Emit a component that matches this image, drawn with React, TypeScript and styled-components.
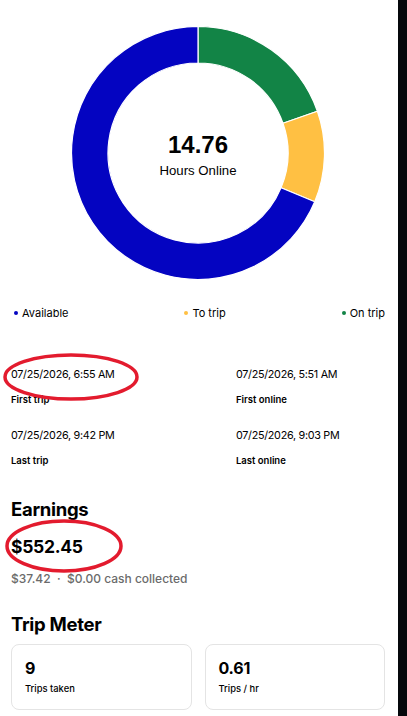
import React from "react";
import styled, { createGlobalStyle } from "styled-components";

const Global = createGlobalStyle`
  html, body { margin: 0; padding: 0; background: #ffffff; }
  body { font-family: Inter, "Noto Sans", sans-serif; color: #000; -webkit-font-smoothing: antialiased; }
`;

const Screen = styled.div`
  display: flex;
  width: 407px;
  height: 716px;
  overflow: hidden;
`;

const Main = styled.main`
  position: relative;
  flex: 1;
  padding: 0 13px 0 11px;
  background: #ffffff;
`;

const EdgeBar = styled.div`
  width: 9px;
  background: #05080c;
`;

const ChartWrap = styled.div`
  position: relative;
  display: flex;
  justify-content: center;
  padding-top: 26px;
`;

const CenterText = styled.div`
  position: absolute;
  top: 26px;
  left: 0;
  right: 0;
  height: 254px;
  display: flex;
  flex-direction: column;
  align-items: center;
  justify-content: center;
  font-family: "Liberation Sans", Arial, sans-serif;
`;

const BigHours = styled.div`
  font-size: 24px;
  font-weight: 700;
  line-height: 28px;
  margin-top: 4px;
`;

const HoursLabel = styled.div`
  font-size: 13.2px;
  line-height: 16px;
  margin-top: 4px;
`;

const Legend = styled.div`
  display: flex;
  justify-content: space-between;
  margin-top: 26px;
  padding-left: 3px;
`;

const LegendItem = styled.div`
  display: flex;
  align-items: center;
  gap: 4px;
  font-size: 11px;
  line-height: 14px;
`;

const Dot = styled.span<{ $c: string }>`
  width: 4px;
  height: 4px;
  border-radius: 50%;
  background: ${(p) => p.$c};
`;

const TimesGrid = styled.div`
  display: grid;
  grid-template-columns: 225px 1fr;
  row-gap: 23px;
  margin-top: 48px;
`;

const TimeBlock = styled.div`
  display: flex;
  flex-direction: column;
  gap: 12px;
`;

const TimeValue = styled.div`
  font-size: 10.8px;
  letter-spacing: -0.3px;
  line-height: 14px;
`;

const TimeLabel = styled.div`
  font-size: 9.5px;
  font-weight: 600;
  line-height: 12px;
`;

const SectionTitle = styled.h2<{ $top: number }>`
  margin: ${(p) => p.$top}px 0 0;
  font-size: 18.5px;
  font-weight: 700;
  line-height: 24px;
  letter-spacing: -0.3px;
`;

const Amount = styled.div`
  margin-top: 13px;
  font-size: 17.5px;
  font-weight: 700;
  line-height: 26px;
  letter-spacing: -0.3px;
`;

const SubLine = styled.div`
  margin-top: 11px;
  font-size: 12px;
  font-weight: 500;
  line-height: 16px;
  color: #6b6b6b;
`;

const Cards = styled.div`
  display: grid;
  grid-template-columns: 1fr 1fr;
  gap: 13px;
  margin-top: 8px;
`;

const Card = styled.div`
  border: 1px solid #e4e4e4;
  border-radius: 8px;
  padding: 13px;
  height: 66px;
  box-sizing: border-box;
`;

const CardValue = styled.div`
  font-size: 16px;
  font-weight: 700;
  line-height: 20px;
  letter-spacing: -0.2px;
`;

const CardLabel = styled.div`
  margin-top: 4px;
  font-size: 9.4px;
  font-weight: 500;
  line-height: 13px;
`;

const Marks = styled.svg`
  position: absolute;
  left: 0;
  top: 0;
  pointer-events: none;
`;

const segments = [
  { label: "On trip", hours: 2.9, color: "#128446" },
  { label: "To trip", hours: 1.72, color: "#ffc043" },
  { label: "Available", hours: 10.14, color: "#0404c1" },
];

const polar = (cx: number, cy: number, r: number, deg: number) => {
  const a = (deg * Math.PI) / 180;
  return [cx + r * Math.sin(a), cy - r * Math.cos(a)];
};

const arc = (a0: number, a1: number, R: number, r: number, c: number) => {
  const large = a1 - a0 > 180 ? 1 : 0;
  const [x0, y0] = polar(c, c, R, a0);
  const [x1, y1] = polar(c, c, R, a1);
  const [x2, y2] = polar(c, c, r, a1);
  const [x3, y3] = polar(c, c, r, a0);
  return `M${x0} ${y0} A${R} ${R} 0 ${large} 1 ${x1} ${y1} L${x2} ${y2} A${r} ${r} 0 ${large} 0 ${x3} ${y3} Z`;
};

function Donut() {
  const total = segments.reduce((s, x) => s + x.hours, 0);
  let start = 0;
  return (
    <svg width={254} height={254} viewBox="0 0 254 254">
      {segments.map((s) => {
        const sweep = (s.hours / total) * 360;
        const d = arc(start, start + sweep, 126.5, 90, 127);
        start += sweep;
        return <path key={s.label} d={d} fill={s.color} stroke="#fff" strokeWidth={1.2} />;
      })}
    </svg>
  );
}

const times = [
  { value: "07/25/2026, 6:55 AM", label: "First trip" },
  { value: "07/25/2026, 5:51 AM", label: "First online" },
  { value: "07/25/2026, 9:42 PM", label: "Last trip" },
  { value: "07/25/2026, 9:03 PM", label: "Last online" },
];

export default function App() {
  return (
    <>
      <Global />
      <Screen>
        <Main>
          <ChartWrap>
            <Donut />
            <CenterText>
              <BigHours>14.76</BigHours>
              <HoursLabel>Hours Online</HoursLabel>
            </CenterText>
          </ChartWrap>
          <Legend>
            <LegendItem>
              <Dot $c="#0404c1" />
              Available
            </LegendItem>
            <LegendItem>
              <Dot $c="#ffc043" />
              To trip
            </LegendItem>
            <LegendItem>
              <Dot $c="#128446" />
              On trip
            </LegendItem>
          </Legend>
          <TimesGrid>
            {times.map((t) => (
              <TimeBlock key={t.label}>
                <TimeValue>{t.value}</TimeValue>
                <TimeLabel>{t.label}</TimeLabel>
              </TimeBlock>
            ))}
          </TimesGrid>
          <SectionTitle $top={30}>Earnings</SectionTitle>
          <Amount>$552.45</Amount>
          <SubLine>$37.42 &nbsp;·&nbsp; $0.00 cash collected</SubLine>
          <SectionTitle $top={25}>Trip Meter</SectionTitle>
          <Cards>
            <Card>
              <CardValue>9</CardValue>
              <CardLabel>Trips taken</CardLabel>
            </Card>
            <Card>
              <CardValue>0.61</CardValue>
              <CardLabel>Trips / hr</CardLabel>
            </Card>
          </Cards>
          <Marks width={398} height={716}>
            <ellipse cx={71} cy={377} rx={66} ry={22} fill="none" stroke="#e31b2e" strokeWidth={3.5} />
            <ellipse cx={64} cy={546} rx={57} ry={25} fill="none" stroke="#e31b2e" strokeWidth={3.5} />
          </Marks>
        </Main>
        <EdgeBar />
      </Screen>
    </>
  );
}
